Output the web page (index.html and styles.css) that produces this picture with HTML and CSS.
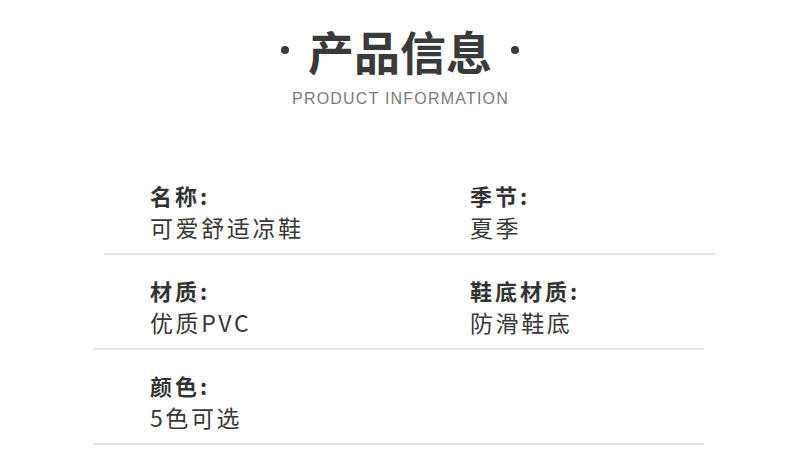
FILE: index.html
```html
<!DOCTYPE html>
<html lang="zh">
<head>
<meta charset="utf-8">
<link rel="stylesheet" href="styles.css">
</head>
<body>
<div class="page">
  <header class="head">
    <h1 class="title"><span class="dot"></span><span class="title-text">产品信息</span><span class="dot"></span></h1>
    <p class="subtitle">PRODUCT INFORMATION</p>
  </header>
  <section class="info">
    <div class="row row-first">
      <div class="cell"><div class="label">名称:</div><div class="value">可爱舒适凉鞋</div></div>
      <div class="cell"><div class="label">季节:</div><div class="value">夏季</div></div>
    </div>
    <div class="row">
      <div class="cell"><div class="label">材质:</div><div class="value">优质PVC</div></div>
      <div class="cell"><div class="label">鞋底材质:</div><div class="value">防滑鞋底</div></div>
    </div>
    <div class="row">
      <div class="cell"><div class="label">颜色:</div><div class="value">5色可选</div></div>
      <div class="cell"></div>
    </div>
  </section>
</div>
</body>
</html>
```
FILE: styles.css
```css
* { box-sizing: border-box; }
html, body { margin: 0; padding: 0; background: #fff; }
body {
  font-family: "Noto Sans CJK SC", "Noto Sans", sans-serif;
  color: #333;
  width: 790px;
  height: 461px;
  overflow: hidden;
}
.head {
  padding-top: 22px;
  display: flex;
  flex-direction: column;
  align-items: center;
  padding-left: 10px;
}
.title {
  margin: 0;
  display: flex;
  align-items: center;
  gap: 19px;
  font-size: 46px;
  line-height: 56px;
  font-weight: 700;
  color: #3a3a3a;
}
.dot {
  width: 8px;
  height: 8px;
  border-radius: 50%;
  background: #3a3a3a;
}
.subtitle {
  margin: 11px 0 0;
  padding-left: 1px;
  font-family: "Liberation Sans", Arial, sans-serif;
  font-size: 16px;
  line-height: 20px;
  letter-spacing: 1.2px;
  color: #7a7a7a;
}
.info {
  padding-top: 71px;
}
.row {
  display: grid;
  grid-template-columns: 320px 1fr;
  margin-left: 94px;
  width: 610px;
  padding: 0 0 11px 56px;
  border-bottom: 2px solid #e3e3e3;
}
.row + .row { padding-top: 20px; }
.row-first {
  margin-left: 104px;
  width: 611px;
  padding-left: 46px;
}
.label {
  font-size: 22px;
  line-height: 30px;
  font-weight: 700;
  letter-spacing: 3px;
  color: #333;
}
.value {
  margin-top: 2px;
  font-size: 23px;
  line-height: 30px;
  letter-spacing: 2.6px;
  color: #383838;
}
```
